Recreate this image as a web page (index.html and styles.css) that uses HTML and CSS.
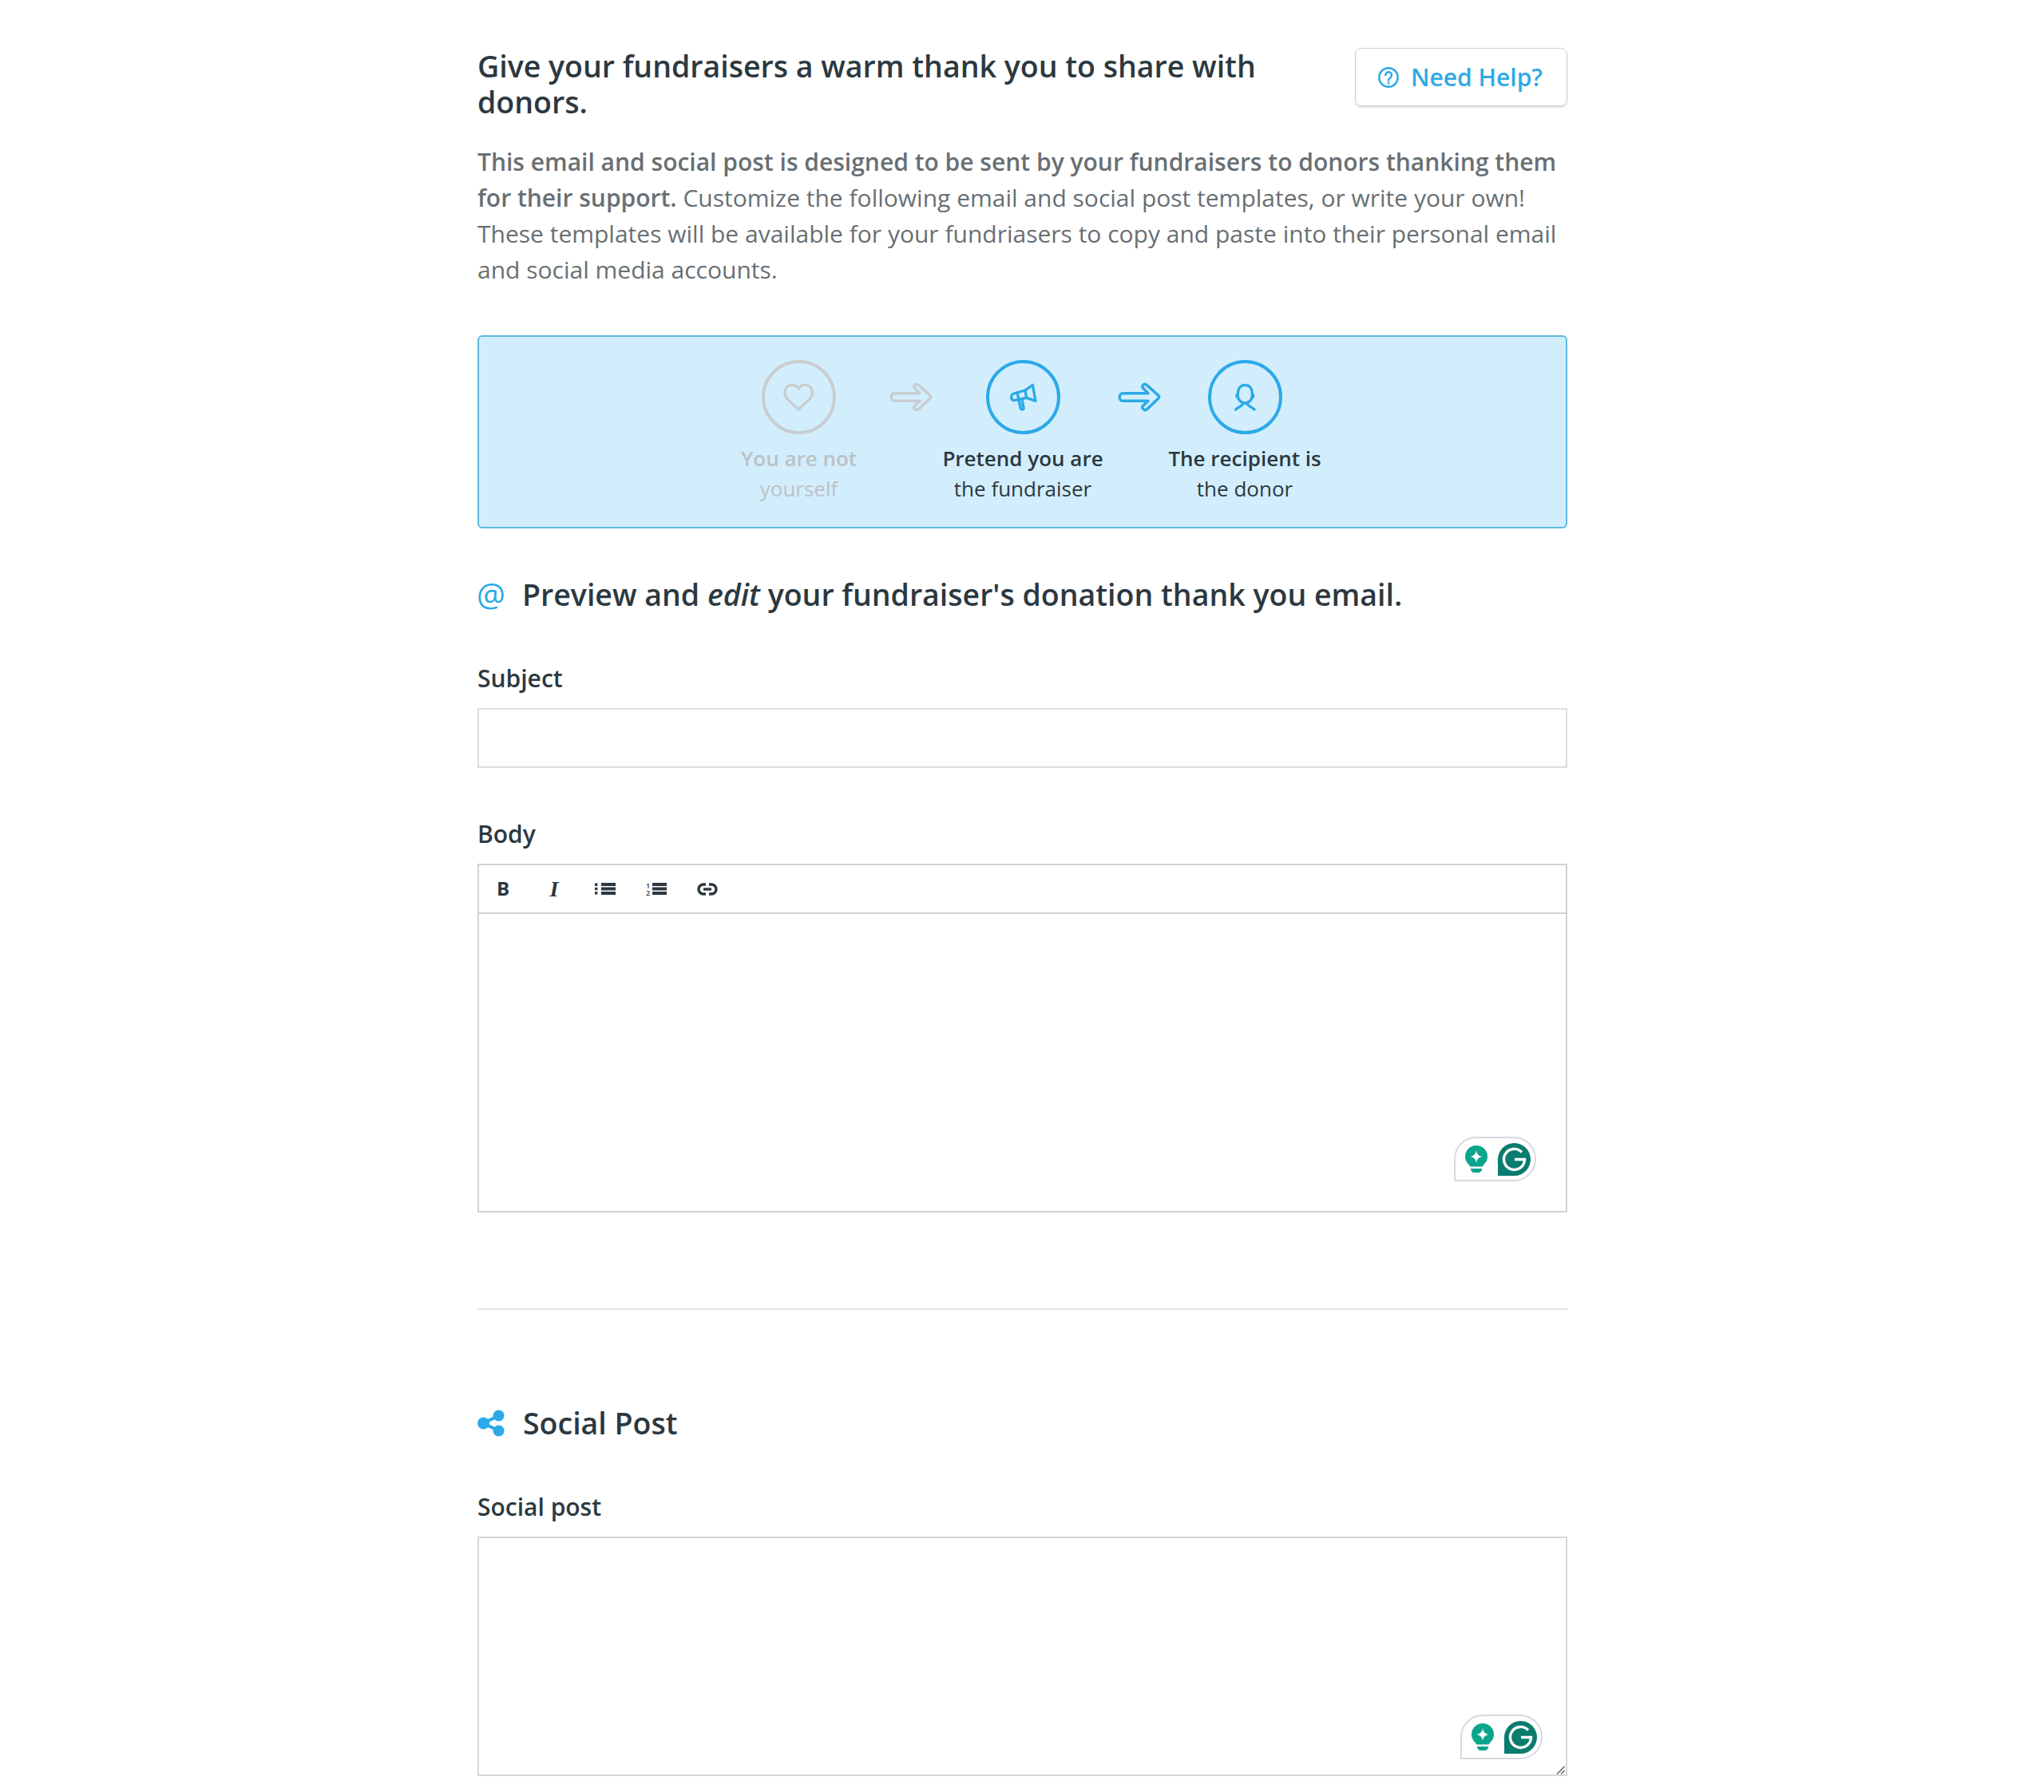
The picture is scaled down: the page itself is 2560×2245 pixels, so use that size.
FILE: index.html
```html
<!DOCTYPE html>
<html lang="en">
	<head>
		<meta charset="UTF-8" />
		<meta name="viewport" content="width=device-width, initial-scale=1.0" />
		<title>Fundraiser Thank You</title>
		<link rel="stylesheet" href="styles.css">
	</head>
	<body>
		<svg class="defs" width="0" height="0" aria-hidden="true">
			<defs>
				<symbol id="grammarly-bulb" viewBox="0 0 28 34">
					<path d="M14 0a14 14 0 0 1 14 14c0 5-2.600 8-5 10.400-.8.800-1.200 1.600-1.200 2.100H6.200c0-.5-.4-1.300-1.200-2.100C2.600 22 0 19 0 14A14 14 0 0 1 14 0z" fill="#0ba58c"/>
					<path d="M14 6c.8 5 3 7.200 8 8-5 .8-7.200 3-8 8-.8-5-3-7.200-8-8 5-.8 7.200-3 8-8z" fill="#fff"/>
					<path d="M7 29h14c0 2.800-1.800 5-4.500 5h-5C8.800 34 7 31.800 7 29z" fill="#0ba58c"/>
				</symbol>
				<symbol id="grammarly-g" viewBox="0 0 41 41">
					<path d="M20.500 0a20.500 20.500 0 0 1 0 41H0V20.500A20.500 20.500 0 0 1 20.500 0z" fill="#0a7c6d"/>
					<path d="M30 11.500A13 13 0 1 0 33.500 20.500H21" fill="none" stroke="#fff" stroke-width="3.400"/>
				</symbol>
				<symbol id="role-arrow" viewBox="484 100 172 118">
					<path d="M510 144H604L584 124C578 116 590 104 600 114L642 152C646 156 646 160 642 164L600 204C590 212 578 200 584 192L604 173H510C492 173 492 144 510 144Z" fill="none" stroke="currentColor" stroke-width="10.500" stroke-linejoin="round"/>
				</symbol>
			</defs>
		</svg>

		<div class="container">
			<div class="intro-head">
				<h1>Give your fundraisers a warm thank you to share with donors.</h1>
				<a class="help-btn" href="#">
					<svg class="help-icon" viewBox="0 0 26 26" fill="none" stroke="currentColor" stroke-width="2.500">
						<circle cx="13" cy="13" r="11.700"/>
						<path d="M9.200 10.300a3.900 3.900 0 1 1 6.100 3.100c-1.300.9-2.300 1.500-2.300 3" stroke-linecap="round"/>
						<circle cx="13" cy="20" r=".5" fill="currentColor"/>
					</svg>
					Need Help?
				</a>
			</div>

			<p class="intro-text">
				<strong>This email and social post is designed to be sent by your fundraisers to donors thanking them for their support.</strong>
				Customize the following email and social post templates, or write your own! These templates will be available for your fundriasers to copy and paste into their personal email and social media accounts.
			</p>

			<div class="roles-box">
				<div class="role muted">
					<div class="role-circle">
						<svg class="icon-heart" viewBox="92 103 125 110" fill="none" stroke="currentColor" stroke-width="10" stroke-linejoin="round">
							<path d="M152 205 110 165C90 140 105 112 130 113 140 113 148 120 152 128 156 120 164 113 176 113 200 112 215 140 195 165Z"/>
						</svg>
					</div>
					<div class="role-text"><strong>You are not</strong><br>yourself</div>
				</div>
				<svg class="role-arrow muted"><use href="#role-arrow"/></svg>
				<div class="role">
					<div class="role-circle">
						<svg class="icon-horn" viewBox="100 105 105 105" fill="none" stroke="currentColor" stroke-width="10" stroke-linejoin="round" stroke-linecap="round">
							<path d="M160 132 188 112 199 172 165 160Z"/>
							<path d="M160 132 118 144C104 148 104 168 118 170L165 160"/>
							<path d="M130 141 136 167"/>
							<path d="M136 170 143 200C145 206 155 204 154 198L148 166"/>
						</svg>
					</div>
					<div class="role-text"><strong>Pretend you are</strong><br>the fundraiser</div>
				</div>
				<svg class="role-arrow arrow-second"><use href="#role-arrow"/></svg>
				<div class="role">
					<div class="role-circle">
						<svg class="icon-person" viewBox="135 105 86 105" fill="none" stroke="currentColor" stroke-width="10" stroke-linejoin="round" stroke-linecap="round">
							<path d="M151 152C150 125 160 112 178 112 196 112 206 125 205 152 205 165 195 180 178 180 161 180 151 165 151 152Z"/>
							<path d="M151 146C146 148 145 156 151 159M205 146C210 148 211 156 205 159"/>
							<path d="M143 204C155 192 165 192 172 182M213 204C201 192 191 192 184 182"/>
						</svg>
					</div>
					<div class="role-text"><strong>The recipient is</strong><br>the donor</div>
				</div>
			</div>

			<div class="section-title">
				<span class="section-at">@</span>
				<h2>Preview and <em>edit</em> your fundraiser's donation thank you email.</h2>
			</div>

			<label class="field-label">Subject</label>
			<input class="text-input" type="text">

			<label class="field-label body-label">Body</label>
			<div class="toolbar">
				<span class="tool tool-b">B</span>
				<span class="tool tool-i">I</span>
				<span class="tool">
					<svg class="list-icon" viewBox="0 0 26 15" fill="currentColor">
						<rect x="0" y="0.500" width="3.400" height="3.400"/><rect x="0" y="5.800" width="3.400" height="3.400"/><rect x="0" y="11.100" width="3.400" height="3.400"/>
						<rect x="8" y="0" width="18" height="4"/><rect x="8" y="5.500" width="18" height="4"/><rect x="8" y="11" width="18" height="4"/>
					</svg>
				</span>
				<span class="tool">
					<span class="list-nums">1<br>2</span>
					<svg class="num-bars" viewBox="0 0 18 15" fill="currentColor">
						<rect x="0" y="0" width="18" height="4"/><rect x="0" y="5.500" width="18" height="4"/><rect x="0" y="11" width="18" height="4"/>
					</svg>
				</span>
				<span class="tool">
					<svg class="link-icon" viewBox="0 0 26 16" fill="none" stroke="currentColor" stroke-width="3.400">
						<path d="M11 2H8a6 6 0 0 0 0 12h3"/>
						<path d="M15 2h3a6 6 0 0 1 0 12h-3"/>
						<path d="M8 8h10"/>
					</svg>
				</span>
			</div>
			<div class="editor">
				<div class="grammarly">
					<svg class="g-bulb"><use href="#grammarly-bulb"/></svg>
					<svg class="g-logo"><use href="#grammarly-g"/></svg>
				</div>
			</div>

			<hr class="divider">

			<div class="section-title">
				<svg class="section-icon" viewBox="0 0 34 34" fill="#2ba9e8">
					<circle cx="7.500" cy="17" r="7.500"/><circle cx="26.500" cy="7.500" r="7"/><circle cx="26.500" cy="26.500" r="7"/>
					<path d="M7.500 17 26.500 7.500M7.500 17l19 9.500" stroke="#2ba9e8" stroke-width="4"/>
				</svg>
				<h2>Social Post</h2>
			</div>

			<label class="field-label">Social post</label>
			<div class="social-wrap">
				<textarea class="social-input"></textarea>
				<div class="grammarly social-grammarly">
					<svg class="g-bulb"><use href="#grammarly-bulb"/></svg>
					<svg class="g-logo"><use href="#grammarly-g"/></svg>
				</div>
				<svg class="resize-grip" viewBox="0 0 11 11" fill="none" stroke="#555" stroke-width="1.200">
					<path d="M1 10.500 10.500 1M6 10.500 10.500 6"/>
				</svg>
			</div>
		</div>
	</body>
</html>
```

FILE: styles.css
```css
* {
	margin: 0;
	padding: 0;
	box-sizing: border-box;
}

body {
	font-family: "Open Sans", sans-serif;
	background: #fff;
	color: #2c3840;
}

.defs {
	position: absolute;
}

.container {
	width: 1365px;
	margin-left: 598px;
	padding: 60px 0 17px;
}

.intro-head {
	display: flex;
	justify-content: space-between;
	align-items: flex-start;
}

.intro-head h1 {
	width: 1010px;
	font-size: 37.5px;
	line-height: 45px;
	font-weight: 600;
}

.help-btn {
	display: flex;
	align-items: center;
	gap: 15px;
	height: 73px;
	padding: 0 30px 0 28px;
	border: 1.500px solid #cfcfcf;
	border-radius: 8px;
	box-shadow: 0 2px 2px rgba(0, 0, 0, 0.12);
	color: #2fa9e6;
	font-size: 30px;
	font-weight: 600;
	text-decoration: none;
	white-space: nowrap;
}

.help-icon {
	width: 26px;
	height: 26px;
}

.intro-text {
	margin-top: 30px;
	font-size: 30px;
	line-height: 45px;
	color: #686f73;
}

.intro-text strong {
	font-weight: 600;
}

.roles-box {
	display: grid;
	grid-template-columns: 227px 52px 230px 57px 212px;
	align-items: start;
	margin-top: 60px;
	height: 242px;
	padding: 29px 0 0 287px;
	background: #d2eefd;
	border: 2px solid #5fb9dc;
	border-radius: 6px;
	color: #2ba9e8;
}

.role {
	display: flex;
	flex-direction: column;
	align-items: center;
}

.role-circle {
	display: flex;
	align-items: center;
	justify-content: center;
	width: 93px;
	height: 93px;
	border: 4px solid currentColor;
	border-radius: 50%;
}

.icon-heart {
	width: 41.700px;
	height: 36.700px;
}

.icon-horn {
	width: 35px;
	height: 35px;
}

.icon-person {
	width: 28.700px;
	height: 35px;
}

.role-text {
	margin-top: 11px;
	font-size: 26px;
	line-height: 38px;
	text-align: center;
	color: #2c3840;
	white-space: nowrap;
}

.role-text strong {
	font-weight: 600;
}

.role-arrow {
	width: 57.300px;
	height: 39.300px;
	margin: 27px 0 0 -2px;
}

.arrow-second {
	justify-self: end;
	margin-right: -2px;
}

.muted {
	color: #c9cdd0;
}

.muted .role-text {
	color: #bcc1c4;
}

.section-title {
	display: flex;
	align-items: center;
	gap: 23px;
	height: 60px;
}

.section-title h2 {
	font-size: 37.500px;
	font-weight: 600;
	line-height: 60px;
}

.section-title h2 em {
	font-weight: 600;
}

.section-at {
	width: 34px;
	margin-left: -1px;
	font-size: 40px;
	color: #2ba9e8;
	line-height: 60px;
}

.roles-box + .section-title {
	margin-top: 53px;
	margin-bottom: 2px;
}

.section-icon {
	width: 34px;
	height: 34px;
}

.field-label {
	display: block;
	font-size: 30px;
	font-weight: 600;
	line-height: 40px;
	margin-top: 55px;
	margin-bottom: 17px;
}

.body-label {
	margin-top: 63px;
}

.text-input {
	display: block;
	width: 100%;
	height: 75px;
	border: 2px solid #dcdcdc;
	background: #fff;
}

.toolbar {
	display: flex;
	align-items: center;
	height: 63px;
	border: 2px solid #d2d2d2;
	color: #2c3840;
}

.tool {
	display: flex;
	align-items: center;
	justify-content: center;
	width: 64px;
	gap: 3px;
}

.tool:first-child {
	margin-left: -2px;
}

.tool-b {
	font-size: 24px;
	line-height: 30px;
	font-weight: 700;
	margin-bottom: 2px;
}

.tool-i {
	font-family: "Liberation Serif", serif;
	font-size: 28px;
	line-height: 30px;
	font-weight: 700;
	font-style: italic;
}

.list-icon {
	width: 26px;
	height: 15px;
}

.list-nums {
	font-size: 9px;
	line-height: 9px;
	font-weight: 600;
}

.num-bars {
	width: 18px;
	height: 15px;
}

.link-icon {
	width: 26px;
	height: 16px;
}

.editor {
	position: relative;
	height: 374px;
	border: 2px solid #d2d2d2;
	border-top: 0;
}

.grammarly {
	position: absolute;
	right: 37px;
	bottom: 37px;
	display: flex;
	align-items: center;
	gap: 13px;
	width: 103px;
	height: 56px;
	padding-left: 12px;
	background: #fff;
	border: 2px solid #d7d9e3;
	border-radius: 28px 28px 28px 0;
}

.g-bulb {
	width: 28px;
	height: 34px;
}

.g-logo {
	width: 41px;
	height: 41px;
}

.divider {
	margin-top: 120px;
	border: 0;
	border-top: 2px solid #e3e5e6;
}

.divider + .section-title {
	margin-top: 112px;
}

.social-wrap {
	position: relative;
}

.social-input {
	display: block;
	width: 100%;
	height: 300px;
	border: 2px solid #d6d6dc;
	resize: none;
	background: #fff;
}

.social-grammarly {
	right: 31px;
	bottom: 21px;
}

.resize-grip {
	position: absolute;
	right: 3px;
	bottom: 2px;
	width: 11px;
	height: 11px;
}
```
